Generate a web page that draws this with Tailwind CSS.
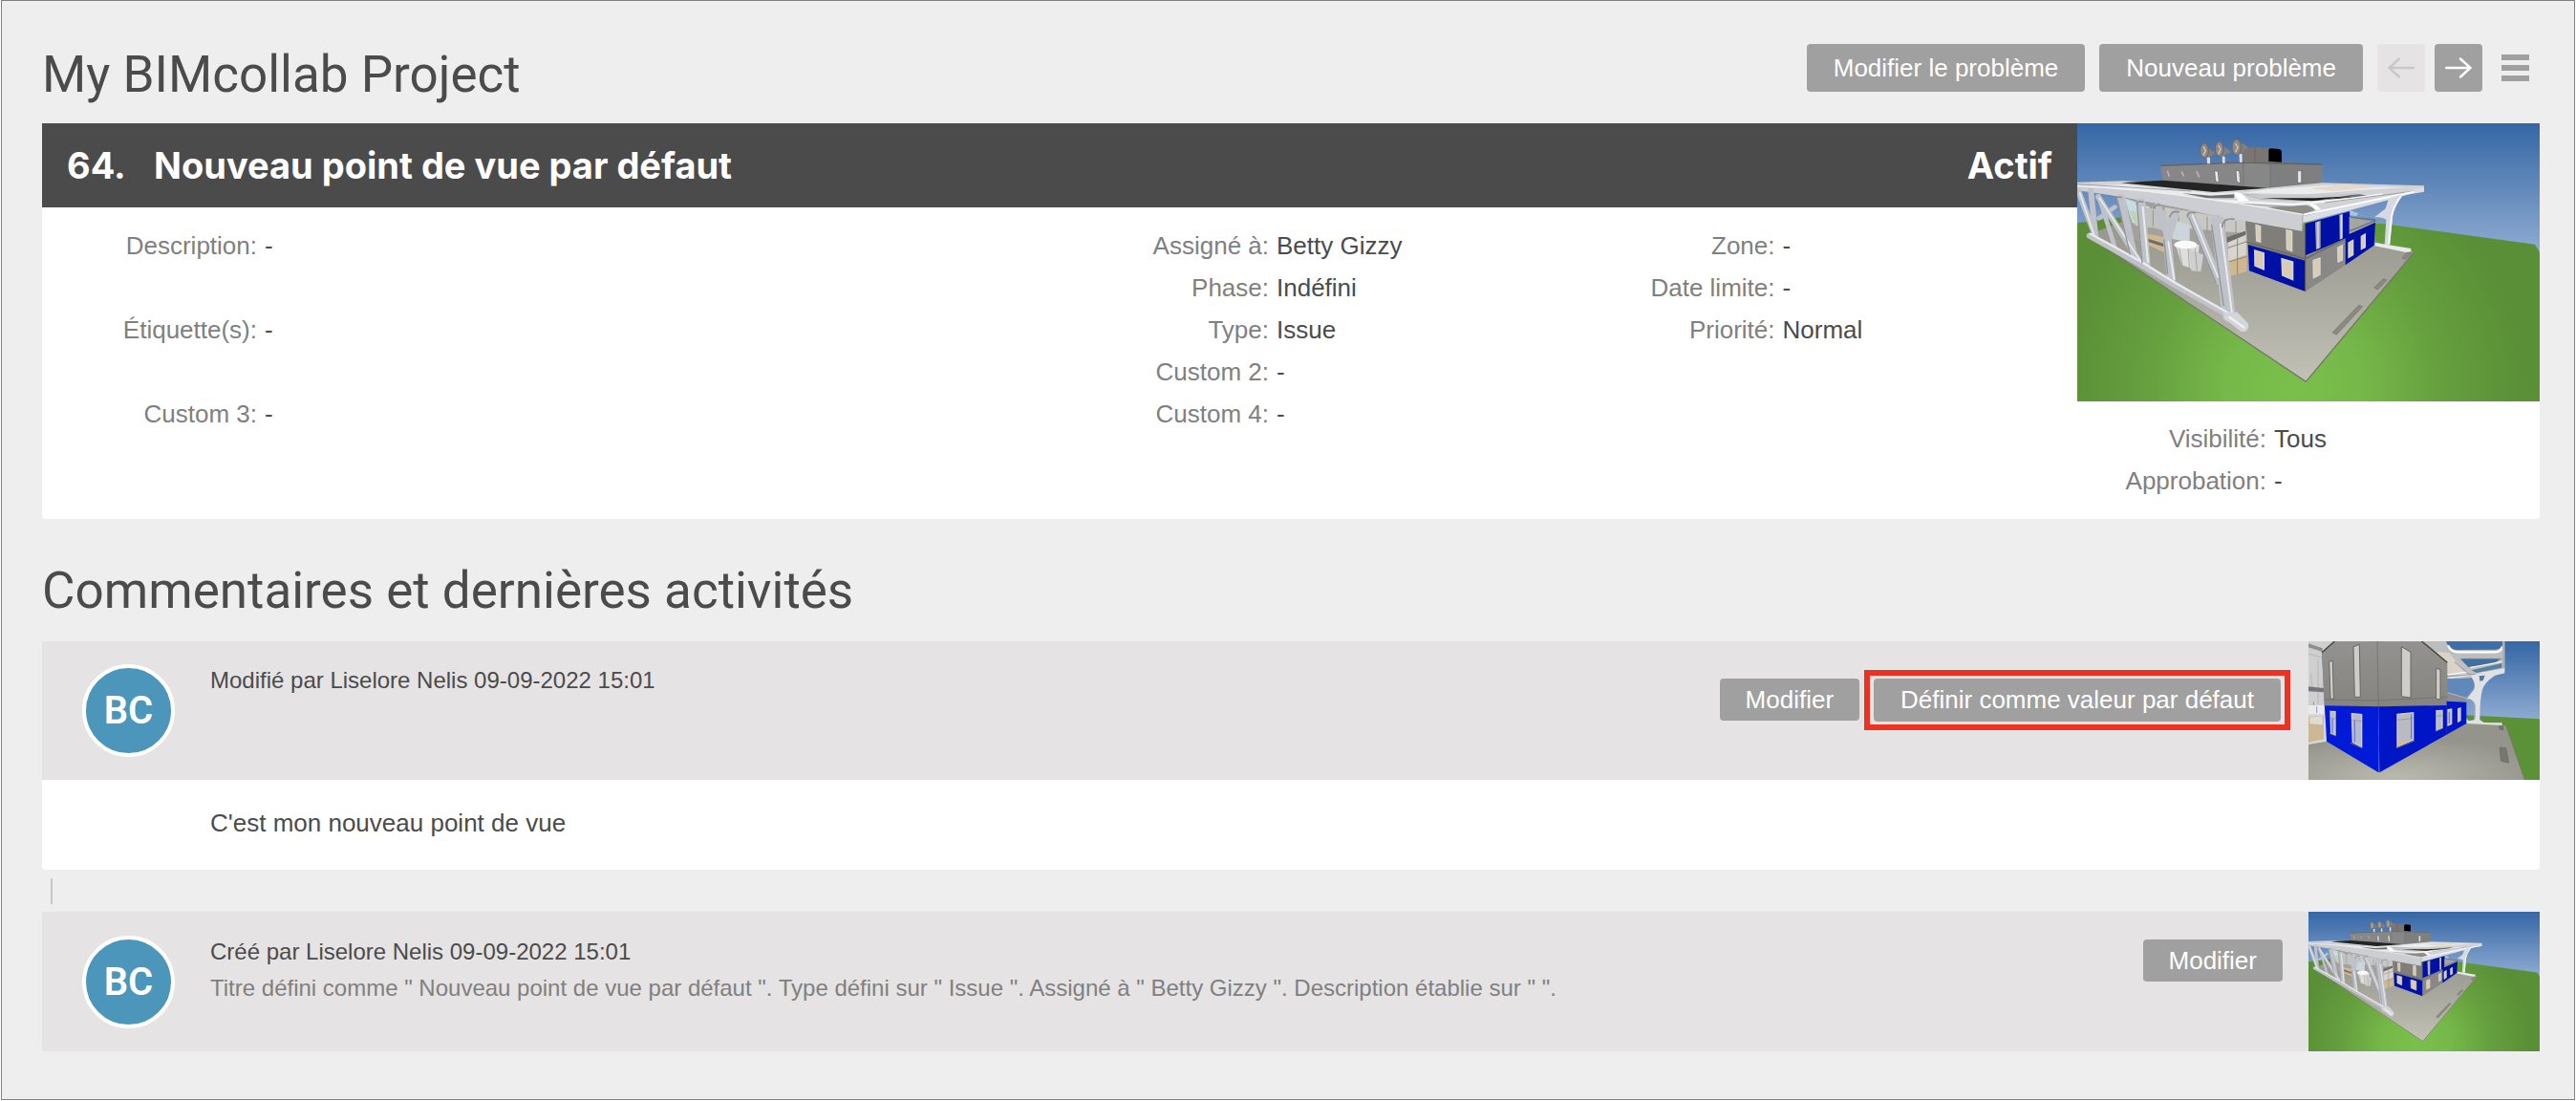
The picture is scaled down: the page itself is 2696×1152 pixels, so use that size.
<!doctype html>
<html lang="fr">

<head>
  <title>My BIMcollab Project</title>
  <meta charset="UTF-8">
  <meta name="viewport" content="width=device-width, initial-scale=1.0">
  <script src="https://cdn.jsdelivr.net/npm/@tailwindcss/browser@4"></script>
</head>

<body class="bg-white font-['Liberation_Sans',Arial,sans-serif] text-[26px] text-[#4b4b4b]">
  <!-- shared drawings -->
  <svg class="absolute size-0" aria-hidden="true">
    <defs>
      <linearGradient id="sky" x1="0" y1="0" x2="0" y2="1">
        <stop offset="0" stop-color="#3566a5" />
        <stop offset="1" stop-color="#8eabd1" />
      </linearGradient>
      <radialGradient id="grass" gradientUnits="userSpaceOnUse" cx="720" cy="860" r="720">
        <stop offset="0" stop-color="#7ac04c" />
        <stop offset="0.3" stop-color="#76b849" />
        <stop offset="0.65" stop-color="#659f3e" />
        <stop offset="1" stop-color="#5a8f37" />
      </radialGradient>
      <linearGradient id="slab" x1="0" y1="0" x2="0" y2="1">
        <stop offset="0" stop-color="#96958c" />
        <stop offset="1" stop-color="#c2c1b6" />
      </linearGradient>
      <radialGradient id="floor" cx="0.4" cy="0.95" r="0.7">
        <stop offset="0" stop-color="#b9b9ad" />
        <stop offset="1" stop-color="#94948d" />
      </radialGradient>
      <linearGradient id="wall" x1="0" y1="0" x2="0" y2="1">
        <stop offset="0" stop-color="#939290" />
        <stop offset="1" stop-color="#85847f" />
      </linearGradient>
    </defs>
    <symbol id="building" viewBox="42 27 1452 873" preserveAspectRatio="none">
      <rect x="42" y="27" width="1452" height="400" fill="url(#sky)" />
      <path d="M42 340L180 322L1000 342L1478 407L1494 430V900H42Z" fill="url(#grass)" />
      <path d="M72 378L200 330L980 400L1100 432L760 838Z" fill="url(#slab)" />
      <path d="M72 378L760 838L1100 432" fill="none" stroke="#77766c" stroke-width="4" />
      <path d="M843 684L926 598L938 602L856 691ZM974 543L1003 515L1014 519L985 549ZM1062 450L1078 432L1092 434L1074 454Z" fill="#8b8a80" stroke="#75746c" stroke-width="2" />
      <!-- interior behind the truss -->
      <path d="M190 262L580 330V490L520 510L250 405L190 370Z" fill="#a3a29a" />
      <path d="M190 262L270 290V350L215 340Z" fill="#c4dce2" />
      <path d="M205 300L275 315V355L225 348Z" fill="#c2d2b4" />
      <path d="M250 290L345 305V372L262 350Z" fill="#bfc3c0" />
      <path d="M315 290L570 335V372L330 352Z" fill="#c9c8c4" />
      <path d="M280 300V350M310 300V360M360 300V355M410 310V370M450 320V372M505 328V380M540 334V372" stroke="#96928e" stroke-width="3" />
      <path d="M255 372L330 388V440L262 408ZM515 415L575 400V492L520 508Z" fill="#cfb78f" />
      <path d="M340 330L395 345V400L340 390Z" fill="#ccd5dc" />
      <path d="M515 395L572 376V440L515 460Z" fill="#d8d5cf" />
      <path d="M515 418L575 398M518 462L575 445M545 390V500" stroke="#8b8680" stroke-width="3" />
      <path d="M512 385L570 365V378L512 402ZM250 385L330 410V420L255 396Z" fill="#6f6c6c" />
      <path d="M352 410L425 408L418 488L370 472Z" fill="#dededc" />
      <path d="M392 420L400 490L430 492L438 440Z" fill="#cfcfcd" />
      <path d="M362 418L372 472M390 418L394 480M412 420L418 488" stroke="#8c8c8a" stroke-width="2" />
      <ellipse cx="382" cy="408" rx="36" ry="13" fill="#fafafa" />
      <!-- roof structure -->
      <path d="M303 160L428 156L600 146L811 156V222L640 232L311 208Z" fill="#878787" />
      <path d="M648 150L811 156V222L648 230Z" fill="#7f7f7f" />
      <path d="M303 160L560 150L811 156" fill="none" stroke="#626262" stroke-width="4" />
      <path d="M648 150V230M563 152V222" stroke="#6a6a6a" stroke-width="2" />
      <path d="M556 106L600 102L645 106V150H566Z" fill="#7a7573" />
      <path d="M600 104V148" stroke="#5c5856" stroke-width="2" />
      <path d="M643 110Q645 106 652 106L676 108Q684 110 684 116V149L643 147Z" fill="#000" />
      <path d="M449 132L459 134V154H450ZM497 130L506 132V152H498ZM550 122L560 124V150H552Z" fill="#d9dde6" />
      <g fill="#857f7c">
        <path d="M436 92L478 122L445 137Z" />
        <path d="M484 86L526 118L492 133Z" />
        <path d="M540 78L580 102L548 127Z" />
      </g>
      <g fill="#8f8986" stroke="#6b6563" stroke-width="3">
        <ellipse cx="441" cy="113" rx="13" ry="23" />
        <ellipse cx="488" cy="108" rx="13" ry="23" />
        <ellipse cx="542" cy="102" rx="14" ry="25" />
      </g>
      <path d="M438 100L445 112L438 128M485 96L492 108L485 124M538 90L546 102L539 118" fill="none" stroke="#cfc9c7" stroke-width="4" />
      <path d="M473 176L484 178L487 214L476 208ZM540 175L551 177L554 216L543 210ZM734 176H746V214H734Z" fill="#e9e6ea" stroke="#5f5f5f" stroke-width="2" />
      <path d="M325 176L331 194M369 178L377 194M417 178L425 196" stroke="#c8a8cf" stroke-width="5" />
      <!-- canopy top -->
      <path d="M42 212L185 208L640 230L811 214L1131 223L1130 242L1088 246L755 314L748 366L500 318L42 232Z" fill="#d2d3d6" />
      <path d="M70 222L190 220L460 246L540 244L548 264L350 250ZM560 246L760 250L890 240L1070 228L820 222L640 234Z" fill="#ececec" />
      <path d="M180 214L310 206L640 230L470 243Z" fill="#242424" />
      <path d="M770 232L880 220L1000 226L850 240Z" fill="#e5dacd" />
      <path d="M565 250L780 258L930 250L960 256L800 270L620 266ZM370 246L460 254L535 250V262L450 262Z" fill="#6d6d6f" />
      <path d="M620 260L780 268L900 260L800 258Z" fill="#1f1f1f" />
      <path d="M42 224Q300 232 600 292L752 318L1131 228V242L1086 250L756 338Z" fill="#dcdde0" />
      <path d="M565 250L700 252L930 246L820 268L620 266Z" fill="#c9cacc" />
      <path d="M620 262L790 262L900 256L780 271Z" fill="#1f1f1f" />
      <path d="M640 290L760 284L800 296L752 312L690 304Z" fill="#8d8d86" />
      <path d="M536 243L556 246L582 270L548 272ZM765 276L790 282L808 298L790 300Z" fill="#fff" />
      <path d="M480 270L720 282L900 264L1000 250" fill="none" stroke="#f4f4f4" stroke-width="7" />
      <path d="M42 218L400 240M820 276L1100 240M480 276L700 288" fill="none" stroke="#9fa0a4" stroke-width="3" />
      <path d="M42 226Q320 238 750 314L748 366L490 322Q300 272 42 238Z" fill="#cdced3" />
      <path d="M42 224Q320 236 750 313" fill="none" stroke="#eff0f2" stroke-width="4" />
      <path d="M752 314L1100 242" stroke="#fff" stroke-width="5" />
      <path d="M750 314L748 366" stroke="#a6a7ab" stroke-width="3" />
      <!-- main block -->
      <path d="M570 334L748 366L758 348V458L578 408Z" fill="#7f7e79" />
      <path d="M578 408L758 458V555L582 490Z" fill="#0010a2" />
      <path d="M758 342L898 304V385L758 442Z" fill="#0010a2" />
      <path d="M758 444L884 388V472L758 555Z" fill="#898887" />
      <path d="M896 320L980 340L896 375Z" fill="#a5a5a3" />
      <path d="M898 300L925 310L918 318L898 316Z" fill="#b0c4df" />
      <path d="M884 380L978 338L974 410L884 472Z" fill="#0010a2" />
      <path d="M898 365L980 332M900 322L978 330" stroke="#6f7070" stroke-width="4" />
      <path d="M789 338L806 332V418L792 424ZM865 314L876 312V388L866 392Z" fill="#a6a6ac" />
      <path d="M798 336V420M871 314V390" stroke="#dcdce2" stroke-width="4" />
      <path d="M758 342V555" stroke="#56565a" stroke-width="3" />
      <path d="M574 400L758 452L884 390" fill="none" stroke="#6a6966" stroke-width="4" />
      <g fill="#d9ccb4" stroke="#d6d5d2" stroke-width="4">
        <path d="M599 426L628 434V486L600 474Z" />
        <path d="M684 452L719 462V518L686 504Z" />
        <path d="M603 346L617 350V400L605 396Z" />
        <path d="M699 362L716 366V428L700 422Z" />
        <path d="M783 458L804 450V502L784 512Z" />
        <path d="M860 418L874 410V456L861 462Z" />
        <path d="M894 402L908 394V440L894 448Z" />
        <path d="M934 382L946 375V416L934 422Z" />
      </g>
      <!-- right column -->
      <path d="M1020 262L1060 250L1040 285L1033 310L1024 408H1007L1012 330Q1000 320 975 322L1010 295Z" fill="#d6dae0" />
      <path d="M1060 254Q1036 285 1029 320L1020 406" fill="none" stroke="#f5f7f9" stroke-width="6" />
      <path d="M978 402L1090 420V430L1074 432L976 412Z" fill="#e9ebee" />
      <!-- truss diagonals and columns -->
      <g fill="none" stroke="#bfc2c8" stroke-linecap="round">
        <path d="M46 240L100 385M85 240L100 385" stroke-width="18" />
        <path d="M110 256L162 422M110 325L160 290" stroke-width="14" />
        <path d="M108 258L240 465" stroke-width="18" />
        <path d="M180 262L220 450" stroke-width="25" />
        <path d="M242 275L258 470" stroke-width="27" />
        <path d="M296 286L322 370L348 310" stroke-width="21" />
        <path d="M350 310L324 390L338 520" stroke-width="27" />
        <path d="M400 310L486 520" stroke-width="25" />
        <path d="M482 335L518 630" stroke-width="42" />
        <path d="M80 380L240 470L340 530L515 630L566 672" stroke-width="18" />
      </g>
      <g fill="none" stroke="#e9ebee" stroke-linecap="round">
        <path d="M50 246L96 380M112 262L240 458M404 316L484 510" stroke-width="5" />
        <path d="M84 374L244 462L340 522L515 622L562 658" stroke-width="7" />
        <path d="M492 345L530 640M248 290L264 462M328 400L346 516" stroke-width="6" />
      </g>
      <path d="M168 266L208 440M230 280L246 466M314 390L326 500M464 345L502 600M392 322L478 528" fill="none" stroke="#92959b" stroke-width="4" />
      <path d="M160 266Q164 256 182 260M228 282Q230 268 250 274M284 294Q286 278 306 286M332 322Q338 298 362 306M388 322Q388 300 414 308M496 354Q500 322 536 328" fill="none" stroke="#8c8e93" stroke-width="5" />
      <path d="M500 620L545 620L578 655Q584 670 570 682L555 680L505 640Z" fill="#d3d5da" />
      <path d="M520 636L566 668" stroke="#f1f2f4" stroke-width="7" stroke-linecap="round" />
    </symbol>
  </svg>

  <main class="mr-px ml-px min-h-[calc(100vh-1px)] border border-[#808080] bg-[#eeeeee] pr-9 pl-[42px]">
    <header class="flex h-32 items-center justify-between">
      <h1 class="pt-[26px] font-[Roboto,sans-serif] text-[53px] leading-[60px] font-normal">My BIMcollab Project</h1>
      <nav class="flex items-center pt-3 pr-[11px]">
        <button class="mr-[15px] h-[50px] rounded-sm bg-[#a0a0a0] px-7 text-white">Modifier le problème</button>
        <button class="mr-[15px] h-[50px] rounded-sm bg-[#a0a0a0] px-7 text-white">Nouveau problème</button>
        <button class="mr-2.5 flex size-[50px] items-center justify-center rounded-sm bg-[#e5e3e4]" disabled aria-label="Précédent">
          <svg class="w-7" viewBox="0 0 28 22" fill="none" stroke="#c9c7c8" stroke-width="2.4" stroke-linecap="round"><path d="M27 11H1.5M12 1.5L1.5 11L12 20.5" /></svg>
        </button>
        <button class="mr-5 flex size-[50px] items-center justify-center rounded-sm bg-[#a0a0a0]" aria-label="Suivant">
          <svg class="w-7" viewBox="0 0 28 22" fill="none" stroke="#fff" stroke-width="2.4" stroke-linecap="round"><path d="M1 11H26.5M16 1.5L26.5 11L16 20.5" /></svg>
        </button>
        <button class="flex w-[29px] flex-col gap-[5px]" aria-label="Menu">
          <span class="h-1.5 w-full bg-[#a0a0a0]"></span>
          <span class="h-1.5 w-full bg-[#a0a0a0]"></span>
          <span class="h-1.5 w-full bg-[#a0a0a0]"></span>
        </button>
      </nav>
    </header>

    <section class="flex rounded-b-sm bg-white">
      <div class="flex-1">
        <div class="flex h-[88px] items-center bg-[#4b4b4b] px-[26px] font-[Inter,sans-serif] text-[38px] font-bold text-white">
          <span class="w-[91px]">64.</span>
          <h2 class="flex-1">Nouveau point de vue par défaut</h2>
          <span>Actif</span>
        </div>
        <div class="grid grid-cols-[2fr_1fr_1fr] pt-[18px] pl-3 leading-[44px]">
          <dl>
            <div class="flex h-[88px] gap-2"><dt class="w-[213px] text-right text-[#808080]">Description:</dt><dd>-</dd></div>
            <div class="flex h-[88px] gap-2"><dt class="w-[213px] text-right text-[#808080]">Étiquette(s):</dt><dd>-</dd></div>
            <div class="flex h-[88px] gap-2"><dt class="w-[213px] text-right text-[#808080]">Custom 3:</dt><dd>-</dd></div>
          </dl>
          <dl>
            <div class="flex gap-2"><dt class="w-[213px] text-right text-[#808080]">Assigné à:</dt><dd>Betty Gizzy</dd></div>
            <div class="flex gap-2"><dt class="w-[213px] text-right text-[#808080]">Phase:</dt><dd>Indéfini</dd></div>
            <div class="flex gap-2"><dt class="w-[213px] text-right text-[#808080]">Type:</dt><dd>Issue</dd></div>
            <div class="flex gap-2"><dt class="w-[213px] text-right text-[#808080]">Custom 2:</dt><dd>-</dd></div>
            <div class="flex gap-2"><dt class="w-[213px] text-right text-[#808080]">Custom 4:</dt><dd>-</dd></div>
          </dl>
          <dl>
            <div class="flex gap-2"><dt class="w-[213px] text-right text-[#808080]">Zone:</dt><dd>-</dd></div>
            <div class="flex gap-2"><dt class="w-[213px] text-right text-[#808080]">Date limite:</dt><dd>-</dd></div>
            <div class="flex gap-2"><dt class="w-[213px] text-right text-[#808080]">Priorité:</dt><dd>Normal</dd></div>
          </dl>
        </div>
      </div>
      <aside class="w-[484px]">
        <svg class="h-[291px] w-full" role="img" aria-label="Point de vue"><use href="#building" /></svg>
        <dl class="pt-[17px] pb-[18px] leading-[44px]">
          <div class="flex gap-2"><dt class="w-[198px] text-right text-[#808080]">Visibilité:</dt><dd>Tous</dd></div>
          <div class="flex gap-2"><dt class="w-[198px] text-right text-[#808080]">Approbation:</dt><dd>-</dd></div>
        </dl>
      </aside>
    </section>

    <h2 class="pt-[45px] pb-[23px] font-[Roboto,sans-serif] text-[53px] leading-[60px] font-normal">Commentaires et dernières activités</h2>

    <article class="rounded-b-sm bg-white">
      <div class="flex bg-[#e5e3e4]">
        <div class="flex-1 pt-6 pl-[42px]">
          <div class="flex gap-[37px]">
            <span class="flex size-[97px] items-center justify-center rounded-full border-4 border-white bg-[#4c96bb] font-[Roboto,sans-serif] text-[40px] font-semibold text-white">BC</span>
            <p class="text-[24px] leading-[34px]">Modifié par Liselore Nelis 09-09-2022 15:01</p>
          </div>
        </div>
        <div class="flex items-start pt-[30px] pr-[19px]">
          <button class="mt-[9px] mr-[5px] h-[44px] rounded-sm bg-[#a0a0a0] px-[27px] text-white">Modifier</button>
          <span class="border-6 border-[#eb3323] px-1 py-[3px]">
            <button class="block h-[45px] rounded-sm bg-[#a0a0a0] px-7 text-white">Définir comme valeur par défaut</button>
          </span>
        </div>
        <svg class="h-[145px] w-[242px]" viewBox="48 33 726 435" preserveAspectRatio="none" role="img" aria-label="Point de vue">
          <rect x="48" y="33" width="726" height="245" fill="url(#sky)" />
          <path d="M540 265L774 277V468H660Z" fill="#5b9137" />
          <path d="M48 354L540 288L668 298L727 468H48Z" fill="url(#floor)" />
          <path d="M668 298L727 468" stroke="#72756a" stroke-width="2" />
          <path d="M48 33H130L90 68L104 348L48 356Z" fill="#cfcfcf" />
          <path d="M48 40L92 55V66L48 52Z" fill="#8f8f8f" />
          <path d="M48 72L92 84M56 135L60 180M78 90V230" stroke="#aaa" stroke-width="2" />
          <path d="M48 175L96 180V193L48 190Z" fill="#77757a" />
          <path d="M48 234H97V262H48Z" fill="#ecebea" />
          <path d="M64 222V234M74 238V258" stroke="#8f8fe0" stroke-width="3" />
          <path d="M48 272L96 266V340L48 350Z" fill="#ccb896" />
          <path d="M52 272L92 268V295L52 292Z" fill="#dedcd6" />
          <path d="M48 264H98V344L48 354" fill="none" stroke="#dcdad6" stroke-width="4" />
          <!-- canopy -->
          <path d="M400 33H664V130L640 136L540 152L484 150V95Z" fill="#bcbdbf" />
          <path d="M450 65L490 70L545 138L484 138Z" fill="#dcd3c8" />
          <path d="M480 33H657V45Q654 58 635 59L510 60Q488 58 480 33Z" fill="#3f6fab" />
          <path d="M486 46Q495 66 515 67H635Q652 66 657 50" fill="none" stroke="#fff" stroke-width="7" />
          <path d="M525 88H650Q640 102 610 106L550 114Z" fill="#426f9f" />
          <path d="M560 124L655 102V116L575 132Z" fill="#55809f" />
          <path d="M484 148L560 138L662 122M556 116L655 97M484 138L555 128" fill="none" stroke="#f4f4f4" stroke-width="4" />
          <path d="M512 94L580 150" stroke="#bfc0c2" stroke-width="11" />
          <path d="M506 98L572 152M484 144L660 128M530 88H656" fill="none" stroke="#808184" stroke-width="2" />
          <path d="M657 33V118H664V33Z" fill="#aeb0b3" />
          <path d="M484 153L560 148L572 170L540 212L484 196Z" fill="#6088bb" />
          <!-- column -->
          <path d="M556 140L664 118V133L634 140Q610 155 598 175Q586 200 586 280L600 288L656 289V297L543 291V284L568 280Q571 262 570 235Q566 212 543 215L568 183Q574 162 556 140Z" fill="#dfe1e5" />
          <path d="M584 142L602 140L596 156L586 158Z" fill="#4e77a6" />
          <path d="M568 183L545 212Q566 216 571 232V278" fill="none" stroke="#9699a0" stroke-width="2" />
          <path d="M484 192L543 210V222L484 220Z" fill="#8d8d8f" />
          <path d="M484 194L543 211" stroke="#b7b7b9" stroke-width="3" />
          <!-- walls -->
          <path d="M90 68L130 33H404L484 100V238L268 238L98 236Z" fill="url(#wall)" />
          <path d="M90 68L130 33M404 33L484 100" stroke="#3d4335" stroke-width="4" />
          <path d="M264 33L268 238M97 216L268 219L484 208" fill="none" stroke="#6c6b68" stroke-width="2" />
          <path d="M99 235L268 238V445L105 347Z" fill="#001ad8" />
          <path d="M268 238L482 234V221L544 224V291L271 445Z" fill="#0016c6" />
          <path d="M268 238V445M482 234V322" stroke="#2637b0" stroke-width="2" />
          <g fill="#cfcdc8" stroke="#686763" stroke-width="3">
            <path d="M113 96L124 95L127 214L117 213Z" />
            <path d="M189 50L208 43L211 208L193 208Z" />
            <path d="M340 50L369 67V210L340 206Z" />
            <path d="M449 118L462 122V216L449 214Z" />
          </g>
          <g fill="#b9bbc2" stroke="#d2d1ce" stroke-width="4">
            <path d="M117 253L132 254V327L119 322Z" />
            <path d="M184 260L215 263V364L187 350Z" />
            <path d="M327 262L377 257V342L327 364Z" />
            <path d="M450 251L468 250V305L450 313Z" />
            <path d="M486 248L497 246V292L486 297Z" />
            <path d="M518 245L525 243V281L518 285Z" />
          </g>
          <path d="M123 276V320M193 282V350M371 262V340M490 255V290" stroke="#6f78e8" stroke-width="4" />
          <path d="M184 280L215 284M327 280L377 275M117 274L132 276M450 268L468 266" stroke="#8d8b88" stroke-width="2" />
          <path d="M328 350L350 340V352L328 362Z" fill="#d9b98a" />
          <path d="M114 322L134 330M180 352L216 368M324 368L381 345M447 315L470 306" stroke="#77756f" stroke-width="3" />
          <path d="M649 366L668 368L677 415L652 408ZM647 299L659 300V311L648 309Z" fill="#777870" stroke="#62635c" stroke-width="2" />
        </svg>
      </div>
      <p class="pt-[23px] pb-[27px] pl-44 leading-[44px]">C'est mon nouveau point de vue</p>
    </article>

    <div class="h-[44px] pt-[9px] pl-[9px]">
      <div class="h-[27px] w-0.5 bg-[#c8c8c8]"></div>
    </div>

    <article class="flex bg-[#e5e3e4]">
      <div class="flex-1 pt-[25px] pl-[42px]">
        <div class="flex gap-[37px]">
          <span class="flex size-[97px] items-center justify-center rounded-full border-4 border-white bg-[#4c96bb] font-[Roboto,sans-serif] text-[40px] font-semibold text-white">BC</span>
          <div class="text-[24px]">
            <p class="leading-[34px]">Créé par Liselore Nelis 09-09-2022 15:01</p>
            <p class="leading-[42px] text-[#808080]">Titre défini comme " Nouveau point de vue par défaut ". Type défini sur " Issue ". Assigné à " Betty Gizzy ". Description établie sur " ".</p>
          </div>
        </div>
      </div>
      <div class="pt-[29px] pr-[27px]">
        <button class="h-[44px] rounded-sm bg-[#a0a0a0] px-[27px] text-white">Modifier</button>
      </div>
      <svg class="h-[146px] w-[242px]" role="img" aria-label="Point de vue"><use href="#building" /></svg>
    </article>
  </main>
</body>

</html>
